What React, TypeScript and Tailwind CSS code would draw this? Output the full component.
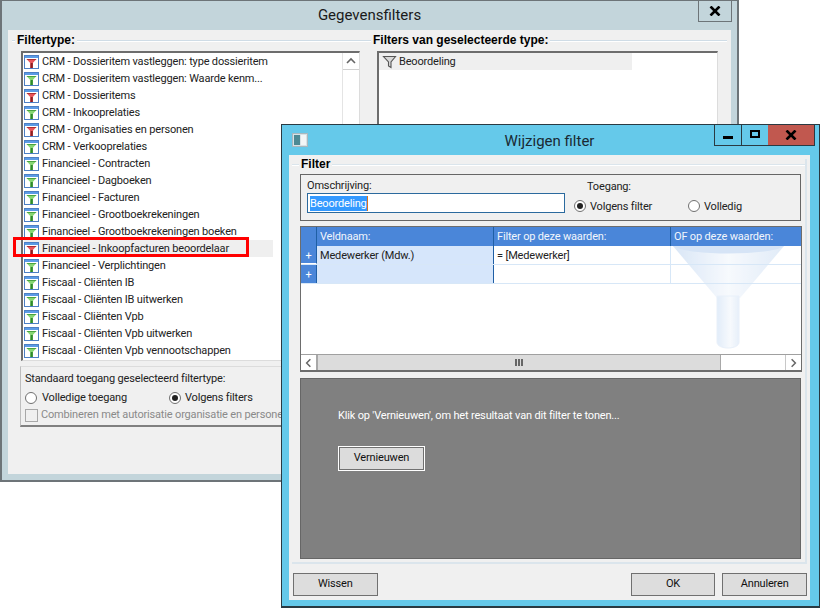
import React from "react";

const rows: [string, "r" | "g"][] = [
  ["CRM - Dossieritem vastleggen: type dossieritem", "r"],
  ["CRM - Dossieritem vastleggen: Waarde kenm...", "g"],
  ["CRM - Dossieritems", "r"],
  ["CRM - Inkooprelaties", "g"],
  ["CRM - Organisaties en personen", "r"],
  ["CRM - Verkooprelaties", "g"],
  ["Financieel - Contracten", "g"],
  ["Financieel - Dagboeken", "g"],
  ["Financieel - Facturen", "g"],
  ["Financieel - Grootboekrekeningen", "g"],
  ["Financieel - Grootboekrekeningen boeken", "g"],
  ["Financieel - Inkoopfacturen beoordelaar", "r"],
  ["Financieel - Verplichtingen", "g"],
  ["Fiscaal - Cliënten IB", "g"],
  ["Fiscaal - Cliënten IB uitwerken", "g"],
  ["Fiscaal - Cliënten Vpb", "g"],
  ["Fiscaal - Cliënten Vpb uitwerken", "g"],
  ["Fiscaal - Cliënten Vpb vennootschappen", "g"],
];

function FilterIcon({ tone }: { tone: "r" | "g" }) {
  const a = tone === "r" ? "#e8555a" : "#86d672";
  const b = tone === "r" ? "#8f1f22" : "#2f8a2c";
  return (
    <svg width="16" height="16" viewBox="0 0 16 16" className="shrink-0">
      <rect x="0.5" y="1.5" width="14" height="13" fill="#fff" stroke="#4d7fc4" />
      <rect x="1" y="2" width="13" height="2" fill="#5b9be6" />
      <path d="M2.5 5 H12.5 L8.8 9 V14 H6.2 V9 Z" fill={a} />
      <path d="M6.6 9 H8.8 V14 H6.4 Z" fill={b} />
      <path d="M2.5 5 H12.5 L11.5 6 H3.5 Z" fill={b} opacity="0.7" />
    </svg>
  );
}

function Radio({ on }: { on?: boolean }) {
  return (
    <span className="flex h-[12px] w-[12px] shrink-0 items-center justify-center rounded-full border border-[#707070] bg-white">
      {on && <span className="h-[6px] w-[6px] rounded-full bg-[#222]" />}
    </span>
  );
}

function Btn({ label, cls }: { label: string; cls: string }) {
  return (
    <div className={`flex h-[23px] items-center justify-center border border-[#707070] bg-[#dddddd] text-[#111] ${cls}`}>
      {label}
    </div>
  );
}

function Chevron({ d }: { d: string }) {
  return (
    <svg width="16" height="16" viewBox="0 0 16 16" fill="none" stroke="#666" strokeWidth="1.6">
      <path d={d} />
    </svg>
  );
}

function Funnel() {
  return (
    <svg width="131" height="103" viewBox="0 0 131 103" className="absolute left-[370px] top-[19px] opacity-70">
      <defs>
        <linearGradient id="fg" x1="0" x2="1" y1="0" y2="0">
          <stop offset="0" stopColor="#c9dcf3" />
          <stop offset="0.5" stopColor="#f4f8fd" />
          <stop offset="1" stopColor="#d4e3f5" />
        </linearGradient>
        <linearGradient id="ft" x1="0" x2="1" y1="0" y2="0">
          <stop offset="0" stopColor="#d6e5f7" />
          <stop offset="0.6" stopColor="#f4f8fd" />
          <stop offset="1" stopColor="#dde9f7" />
        </linearGradient>
      </defs>
      <path d="M2 0 H113 L69 52 H46 Z" fill="url(#fg)" />
      <path d="M2 0 H113 C100 10 16 10 2 0 Z" fill="#c5daf3" />
      <path d="M46 50 H68 V96 C68 104 46 104 46 96 Z" fill="url(#ft)" stroke="#e0ebf8" />
    </svg>
  );
}

function BackWindow() {
  return (
    <div className="absolute left-0 top-0 flex h-[482px] w-[739px] flex-col border-2 border-t-[1px] border-[#6d7478] bg-[#c3d5db] pb-[6px] pl-[6px] pr-[6px]">
      <div className="relative flex h-[29px] shrink-0 items-center justify-center text-[15px] tracking-normal text-[#1a1a1a]">
        Gegevensfilters
        <div className="absolute right-[-1px] top-[-1px] flex h-[22px] w-[34px] items-center justify-center border border-[#6d7478] text-black">
          <svg width="12" height="10" viewBox="0 0 12 10"><path d="M1.5 0.5 L10.5 9.5 M10.5 0.5 L1.5 9.5" stroke="#000" strokeWidth="2.6" /></svg>
        </div>
      </div>
      <div className="relative flex-1 bg-[#f0f0f0] pl-[13px] pt-[21px]">
        <div className="absolute left-[4px] right-[4px] top-[10px] h-[2px] border-t border-[#cfdce6] bg-white" />
        <div className="absolute left-[7px] top-[3px] bg-[#f0f0f0] px-[2px] font-['Liberation_Sans',sans-serif] text-[12px] font-bold leading-[15px] tracking-normal">Filtertype:</div>
        <div className="absolute left-[363px] top-[3px] bg-[#f0f0f0] px-[2px] font-['Liberation_Sans',sans-serif] text-[12px] font-bold leading-[15px] tracking-normal">Filters van geselecteerde type:</div>
        <div className="flex gap-[17px]">
          <div className="relative h-[310px] w-[339px] overflow-hidden border-b border-r border-l-2 border-t-2 border-b-[#dcdcdc] border-l-[#6d6d6d] border-r-[#dcdcdc] border-t-[#6d6d6d] bg-white pl-px">
            {rows.map(([t, c], i) => (
              <div key={t} className={`flex h-[17px] items-center gap-[2px] ${i === 11 ? "w-[249px] bg-[#efefef]" : ""}`}>
                <FilterIcon tone={c} />
                <span className="whitespace-nowrap pt-[2px] text-[#222]">{t}</span>
              </div>
            ))}
            <div className="absolute right-0 top-0 h-full w-[17px] border-l border-[#e4e4e4] bg-white">
              <div className="flex h-[17px] items-center justify-center border-b border-[#d0d0d0]">
                <Chevron d="M4 10 L8 6 L12 10" />
              </div>
            </div>
          </div>
          <div className="h-[310px] w-[341px] border-b border-r border-l-2 border-t-2 border-b-[#dcdcdc] border-l-[#6d6d6d] border-r-[#dcdcdc] border-t-[#6d6d6d] bg-white">
            <div className="flex h-[17px] w-[253px] items-center gap-[1px] bg-[#efefef] pl-[3px]">
              <svg width="16" height="14" viewBox="0 0 16 14" fill="none" stroke="#555" strokeWidth="1.1"><path d="M1.5 1.5 H13.5 L9 7 V12.5 L6.5 11 V7 Z" fill="#d8d8d8" /></svg>
              <span className="pt-[2px] text-[#222]">Beoordeling</span>
            </div>
          </div>
        </div>
        <div className="ml-[-1px] mt-[5px] h-[61px] w-[300px] border-b-2 border-l border-t border-b-[#808080] border-l-[#bdbdbd] border-t-[#dcdcdc] pl-[4px] pt-[4px]">
          <div className="leading-[16px] text-[#222]">Standaard toegang geselecteerd filtertype:</div>
          <div className="mt-[4px] flex h-[14px] items-center">
            <Radio />
            <span className="ml-[5px] w-[127px] text-[#222]">Volledige toegang</span>
            <Radio on />
            <span className="ml-[4px] text-[#222]">Volgens filters</span>
          </div>
          <div className="mt-[2px] flex items-center">
            <span className="h-[13px] w-[13px] border border-[#a8a8a8] bg-[#f0f0f0]" />
            <span className="ml-[3px] whitespace-nowrap text-[#8a8a8a]">Combineren met autorisatie organisatie en personen</span>
          </div>
        </div>
        <div className="absolute left-[5px] top-[207px] h-[20px] w-[236px] border-[3px] border-[#ff0000]" />
      </div>
    </div>
  );
}

function Cell({ cls, children }: { cls: string; children?: React.ReactNode }) {
  return <div className={`flex items-center whitespace-nowrap ${cls}`}>{children}</div>;
}

function FrontWindow() {
  return (
    <div className="absolute left-[281px] top-[124px] flex h-[484px] w-[539px] flex-col border border-b-2 border-[#2a3a42] bg-[#65c9ea] pb-[6px] pl-[7px] pr-[9px]">
      <div className="relative flex h-[30px] shrink-0 items-center justify-center pt-[3px] text-[15px] tracking-normal text-[#1a2a33]">
        Wijzigen filter
        <svg width="16" height="14" viewBox="0 0 16 14" className="absolute left-[3px] top-[8px]">
          <rect x="0.5" y="0.5" width="15" height="13" fill="#d8e2e6" stroke="#a8b8be" />
          <rect x="2" y="2" width="6" height="10" fill="#4d8a94" />
          <rect x="9" y="2" width="5" height="10" fill="#f2f6f7" />
        </svg>
        <div className="absolute right-[-5px] top-0 flex h-[21px] border border-t-0 border-[#2a3a42]">
          <div className="flex w-[27px] items-end justify-center border-r border-[#2a3a42] pb-[6px]"><span className="h-[3px] w-[10px] bg-black" /></div>
          <div className="flex w-[26px] items-center justify-center pb-[2px]"><span className="h-[8px] w-[10px] border-2 border-black" /></div>
          <div className="flex w-[46px] items-center justify-center bg-[#c1584f] pb-[1px]">
            <svg width="12" height="10" viewBox="0 0 12 10"><path d="M1.5 0.5 L10.5 9.5 M10.5 0.5 L1.5 9.5" stroke="#000" strokeWidth="2.6" /></svg>
          </div>
        </div>
      </div>
      <div className="flex flex-1 flex-col bg-[#f0f0f0] px-[3px] pt-[4px]">
        <div className="relative h-[405px] border-b-2 border-r-2 border-[#dbe5ec] px-[8px] pt-[15px]">
          <div className="absolute left-0 right-0 top-[5px] h-[2px] border-t border-[#dbe5ec] bg-white" />
          <div className="absolute left-[7px] top-[-2px] bg-[#f0f0f0] px-[2px] font-['Liberation_Sans',sans-serif] text-[12px] font-bold leading-[15px] tracking-normal">Filter</div>

          <div className="relative flex h-[47px] w-[501px] border border-[#666] pl-[6px]">
            <div className="w-[258px] pt-[3px]">
              <div className="leading-[15px] text-[#222]">Omschrijving:</div>
              <div className="flex h-[20px] items-center border border-[#2b6a9e] bg-white pl-[2px]">
                <span className="bg-[#3399ff] leading-[15px] text-white">Beoordeling</span>
                <span className="h-[15px] w-px bg-[#d9731f]" />
              </div>
            </div>
            <div className="ml-[9px] flex-1 pt-[4px]">
              <div className="ml-[13px] leading-[15px] text-[#222]">Toegang:</div>
              <div className="mt-[3px] flex items-center">
                <Radio on />
                <span className="ml-[4px] w-[98px] pt-[2px] text-[#222]">Volgens filter</span>
                <Radio />
                <span className="ml-[4px] pt-[2px] text-[#222]">Volledig</span>
              </div>
            </div>
          </div>

          <div className="relative mt-[5px] h-[146px] w-[502px] overflow-hidden border border-b-2 border-[#6d6d6d] bg-white">
            <Funnel />
            <div className="relative flex h-[19px] bg-[#4a86d9] text-[#f2f6fc]">
              <Cell cls="w-[16px] border-r border-[#1f5fa5]" />
              <Cell cls="w-[177px] border-r border-[#1f5fa5] pl-[3px] pt-[2px]">Veldnaam:</Cell>
              <Cell cls="w-[177px] border-r border-[#1f5fa5] pl-[3px] pt-[2px]">Filter op deze waarden:</Cell>
              <Cell cls="flex-1 pl-[3px] pt-[2px]">OF op deze waarden:</Cell>
            </div>
            <div className="relative flex h-[19px] border-b border-[#d7e7f7] text-[#222]">
              <Cell cls="w-[16px] justify-center border-r border-[#1f5fa5] border-b border-b-white bg-[#4a86d9] pt-[3px] text-white">+</Cell>
              <Cell cls="w-[177px] border-r border-[#1f5fa5] bg-[#d6e6fb] pl-[3px] pt-[3px]">Medewerker (Mdw.)</Cell>
              <Cell cls="w-[177px] border-r border-[#d7e7f7] pl-[3px] pt-[3px]">= [Medewerker]</Cell>
              <Cell cls="flex-1" />
            </div>
            <div className="relative flex h-[19px] border-b border-[#d7e7f7]">
              <Cell cls="w-[16px] justify-center border-r border-[#1f5fa5] bg-[#4a86d9] pt-[3px] text-white">+</Cell>
              <Cell cls="w-[177px] border-r border-[#1f5fa5] bg-[#d6e6fb]" />
              <Cell cls="w-[177px] border-r border-[#d7e7f7]" />
              <Cell cls="flex-1" />
            </div>
            <div className="absolute bottom-0 left-0 right-0 flex h-[16px] border-t border-[#a0a0a0] bg-white">
              <div className="flex w-[17px] items-center justify-center border-r-2 border-[#a8a8a8]"><Chevron d="M10 4 L6 8 L10 12" /></div>
              <div className="flex w-[402px] items-center justify-center gap-px bg-[#dcdcdc] pr-[1px]">
                <span className="h-[7px] w-[2px] bg-[#666]" />
                <span className="h-[7px] w-[2px] bg-[#666]" />
                <span className="h-[7px] w-[2px] bg-[#666]" />
              </div>
              <div className="flex-1 border-l border-[#a8a8a8]" />
              <div className="flex w-[16px] items-center justify-center border-l border-[#c8c8c8]"><Chevron d="M6 4 L10 8 L6 12" /></div>
            </div>
          </div>

          <div className="mt-[6px] h-[181px] w-[501px] border border-[#666] bg-[#808080] pl-[37px] pt-[29px] text-white">
            <div className="leading-[15px]">Klik op 'Vernieuwen', om het resultaat van dit filter te tonen...</div>
            <div className="mt-[23px] flex h-[25px] w-[87px] items-center justify-center border border-white bg-[#dcdcdc] text-[#111] outline outline-1 -outline-offset-2 outline-[#707070]">
              Vernieuwen
            </div>
          </div>
        </div>
        <div className="mt-[9px] flex pl-px">
          <Btn label="Wissen" cls="w-[85px]" />
          <Btn label="OK" cls="ml-[253px] w-[85px]" />
          <Btn label="Annuleren" cls="ml-[7px] w-[85px]" />
        </div>
      </div>
    </div>
  );
}

export default function App() {
  return (
    <div className="relative h-[608px] w-[820px] overflow-hidden bg-white font-['Roboto',sans-serif] text-[11px] tracking-[-0.17px] text-black">
      <BackWindow />
      <FrontWindow />
    </div>
  );
}
